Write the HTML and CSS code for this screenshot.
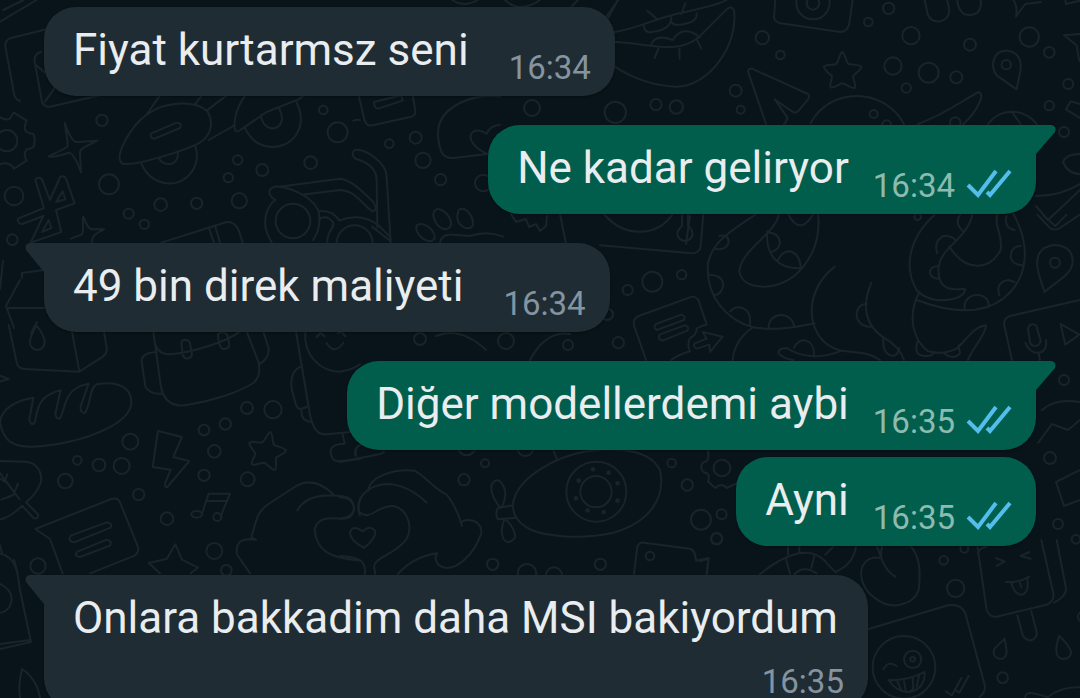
FILE: index.html
```html
<!DOCTYPE html>
<html lang="tr">

<head>
  <meta charset="UTF-8">
  <meta name="viewport" content="width=device-width, initial-scale=1">
  <title>Sohbet</title>
  <link rel="stylesheet" href="styles.css">
</head>

<body>

  <!-- wallpaper, each group is drawn at 3x -->
  <svg class="wallpaper" viewBox="0 0 1080 698" preserveAspectRatio="xMidYMid slice" aria-hidden="true">
    <defs>
      <path id="star" d="M0 -56C8 -52 10 -30 18 -20C34 -18 50 -18 57 -12C58 -2 38 8 32 16C34 32 42 44 37 52C26 54 12 40 0 38C-12 40 -24 54 -35 50C-40 42 -30 28 -31 16C-40 8 -56 -4 -55 -12C-48 -20 -30 -16 -18 -20C-10 -30 -8 -52 0 -56Z" />
      <g id="check"><path d="M2 17L12 27L30 3M21 24L24 27L44 3" /></g>
    </defs>

    <!-- top left: letters, gear, ufo, glasses -->
    <g transform="scale(.3333)">
      <path d="M0 65L110 0M10 30L70 0M60 302Q48 300 43 286L16 140Q14 122 30 115L140 88M150 320Q132 322 126 305L104 185Q102 160 124 155M108 195L190 265M135 305L170 255M150 320L300 286" />
    </g>
    <g transform="translate(0 90) scale(.3333)">
      <circle cx="20" cy="152" r="32" />
      <path d="M0 82Q18 92 30 86Q38 70 42 68L80 92Q70 112 78 125Q90 132 100 132Q108 150 100 172Q88 176 80 178Q68 192 80 212L42 236Q28 214 0 222" />
      <path d="M194 98C204 128 218 158 232 156L292 152C262 168 238 174 240 190L243 247C232 216 220 192 208 188C190 192 166 204 146 199C174 184 196 178 203 168C204 148 196 116 194 98Z" />
      <path d="M250 380C258 398 262 416 276 418L312 418C290 430 274 436 276 460M248 384Q252 430 244 434L212 446" />
      <path d="M106 270Q116 258 126 268L150 330L180 262Q190 254 198 266L224 340L168 360L184 426L92 458L130 378L66 402Q52 402 54 386L132 354ZM168 336L188 304L196 328ZM126 426L146 390L154 414Z" />
      <path d="M360 210C352 188 390 110 440 74C500 30 590 32 622 64C644 100 632 140 596 160C560 178 420 226 372 222Q362 220 360 210ZM454 130L530 98Q548 98 540 114L464 146Q446 142 454 130ZM424 220C450 284 520 296 562 260C590 236 596 200 586 168M476 204C488 230 536 232 534 186M440 74L480 16M584 44L606 16M620 62L680 16M626 150L700 108M736 16C710 50 698 96 706 122Q712 128 724 118L800 66L896 28L912 16M736 116C768 184 850 186 886 138C908 106 906 70 890 38M784 74C782 120 842 132 846 86Q846 70 838 56" />
      <path d="M808 304Q814 288 838 290L1020 266C1060 272 1086 304 1120 336Q1136 360 1118 364C1090 350 1070 302 1020 300L906 314M808 304Q808 320 826 330C796 352 786 400 806 440L816 460M838 290C880 294 940 324 956 364C990 360 1008 376 1018 392C1060 374 1110 378 1150 420L1170 440M956 364Q966 410 940 450M956 388Q980 372 1000 398C1004 416 980 420 982 460M1060 92Q1070 88 1080 90" />
      <circle cx="879" cy="393" r="52" /><circle cx="1064" cy="460" r="54" />
      <path d="M484 458L680 396Q704 394 716 420L728 458M628 418L642 458M646 410L660 458" />
      <circle cx="306" cy="91" r="17" /><circle cx="327" cy="283" r="30" /><circle cx="42" cy="318" r="28" /><circle cx="37" cy="449" r="16" /><circle cx="386" cy="371" r="15" /><circle cx="433" cy="403" r="14" /><circle cx="482" cy="344" r="19" /><circle cx="590" cy="340" r="17" /><circle cx="685" cy="263" r="14" /><circle cx="713" cy="210" r="14" /><circle cx="787" cy="240" r="18" /><circle cx="718" cy="332" r="23" /><circle cx="932" cy="218" r="19" /><circle cx="970" cy="60" r="13" /><circle cx="1013" cy="127" r="30" />
    </g>
    <g transform="translate(240 90) scale(.3333)">
      <path d="M356 16L374 92Q380 110 398 106L514 80Q528 76 526 62L518 16M402 36L484 16L488 32L414 56Q402 54 402 36Z" />
      <path d="M346 206Q330 190 344 180C376 174 440 220 440 260L452 458M346 206C380 214 410 236 410 270L412 412M396 410L452 454" />
      <path d="M780 20C700 8 594 50 594 130C596 180 606 206 640 204L742 192C704 174 682 148 696 128C710 116 730 124 740 132Q750 106 780 104" />
      <path d="M584 362C600 346 630 374 634 402C626 432 592 414 584 390Q576 374 584 362ZM656 360C676 346 704 380 698 408C680 426 650 404 652 378ZM530 406C552 392 586 420 584 446Q570 464 544 442Q524 422 530 406ZM600 458Q606 430 640 434L690 438Q740 420 790 440" />
      <circle cx="448" cy="161" r="13" /><circle cx="527" cy="143" r="18" /><circle cx="549" cy="211" r="23" /><circle cx="602" cy="269" r="17" /><circle cx="730" cy="279" r="25" />
    </g>

    <!-- strips between the bubbles -->
    <g>
      <path d="M511 214L516 222L526 219L529 227L536 224L540 231L546 226L547 216M560 214L566 244M690 216L686 244" />
      <path d="M452 0Q464 8 478 0M505 0Q520 14 540 0M572 6L578 0M604 20L618 0" />
      <circle cx="420" cy="339" r="6" /><circle cx="506" cy="341" r="8" /><circle cx="568" cy="345" r="5" /><circle cx="532" cy="108" r="8" />
      <path d="M436 336Q460 326 486 350M530 360Q546 330 570 334" />
    </g>

    <!-- top right: lips, camera, star, pins -->
    <g transform="translate(600 0) scale(.3333)">
      <path d="M44 96C120 84 160 58 220 44C290 28 350 18 380 0M44 126C140 128 230 168 298 110L382 26Q394 16 402 32C416 130 330 262 226 260C150 256 96 232 44 200M24 54L54 0M132 78Q134 100 156 96Q214 90 214 52M216 68Q224 80 262 70Q292 64 290 40M152 136Q166 100 218 120Q250 72 300 112M142 32L172 58M256 10L244 42M176 144L164 174M238 146L239 176M290 118L304 146" />
      <path d="M526 0L522 52Q524 66 542 70L722 96Q744 94 748 70L758 0M974 0L984 46Q996 68 1022 64Q1048 56 1048 30L1042 0M1072 0Q1074 30 1092 42Q1112 50 1132 38Q1146 24 1142 0M1240 0Q1254 20 1248 50Q1262 30 1276 12L1324 6M1396 0L1398 12L1440 2" />
      <circle cx="639" cy="8" r="50" /><circle cx="639" cy="10" r="19" />
      <use href="#star" x="727" y="212" />
      <path d="M498 372L444 214Q446 204 456 206L624 282Q630 288 624 298L594 334Q586 342 576 334L524 298L562 352Q562 364 552 372M632 370C690 260 850 260 912 372M954 372C1040 340 1090 300 1136 276Q1148 280 1142 300C1130 330 1116 350 1090 372M1164 372C1200 324 1270 322 1310 372M1236 336L1262 372M1440 102L1392 106L1430 136L1438 182M1440 312L1412 304L1398 328L1440 354" />
      <path d="M1250 268L1190 226C1166 190 1186 150 1220 152C1256 154 1268 184 1260 220Z" />
      <circle cx="1219" cy="194" r="14" /><circle cx="487" cy="113" r="20" /><circle cx="541" cy="165" r="13" /><circle cx="407" cy="272" r="18" /><circle cx="422" cy="329" r="12" /><circle cx="229" cy="321" r="20" /><circle cx="168" cy="314" r="17" /><circle cx="46" cy="337" r="32" /><circle cx="805" cy="66" r="13" /><circle cx="866" cy="25" r="17" /><circle cx="933" cy="107" r="26" /><circle cx="879" cy="198" r="26" /><circle cx="986" cy="218" r="30" /><circle cx="919" cy="264" r="14" /><circle cx="1069" cy="232" r="18" /><circle cx="1110" cy="134" r="18" /><circle cx="1288" cy="111" r="29" /><circle cx="1348" cy="157" r="16" /><circle cx="1405" cy="252" r="15" /><circle cx="1348" cy="317" r="14" /><circle cx="821" cy="342" r="12" /><circle cx="860" cy="374" r="13" /><circle cx="1066" cy="368" r="16" />
    </g>
    <g>
      <circle cx="1064" cy="132" r="5" />
      <path d="M1080 154Q1066 154 1063 162Q1068 174 1080 174M1036 196Q1060 196 1080 184M1036 206L1048 220L1080 190" />
    </g>

    <!-- middle right: octopus, document, pins -->
    <g transform="translate(600 210) scale(.3333)">
      <path d="M12 12C70 82 170 84 218 12M246 12V48Q226 66 234 80Q246 98 266 90Q284 78 274 58L264 46V12M310 12L302 110Q298 130 276 130L0 106" />
      <path d="M468 12C400 60 338 90 324 160C316 260 380 330 460 352C530 364 590 350 644 340M536 12C530 70 420 120 418 186C430 240 520 244 580 200C640 150 662 80 654 12M502 64C496 130 530 180 604 174M358 78Q386 70 386 98Q376 124 346 116M502 68Q536 66 540 98Q538 118 516 126M534 150Q546 124 570 124Q600 132 602 172M564 12Q600 80 640 12M328 194Q368 196 370 224Q366 252 344 256M390 304C410 280 456 292 450 342M506 352C508 302 578 304 582 350" />
      <path d="M704 170C600 250 620 400 724 422C660 450 600 440 560 414Q534 414 536 430Q550 446 580 450M724 422C790 430 800 426 840 450M814 218C780 300 804 350 850 382Q900 410 912 450M800 282C760 280 756 350 812 350M850 384Q846 430 876 438Q894 438 898 414M582 414C596 378 644 384 642 436M398 450Q404 390 456 354" />
      <path d="M1004 14C920 90 914 180 950 240C980 274 1030 276 1070 264Q1100 250 1094 236C1060 240 1010 246 1016 170C1024 110 1100 90 1118 12M1048 110C1100 190 1170 180 1202 120C1210 70 1180 50 1192 12M1240 12C1290 100 1290 200 1212 264C1140 320 1040 304 950 270M958 246C920 320 940 390 984 424Q1030 436 1070 416C1100 390 1120 350 1158 346C1160 370 1120 410 1104 450M1082 12Q1060 40 1092 66M1012 130Q1000 94 1030 78Q1056 76 1066 90M1014 168Q990 170 990 188Q994 206 1016 206M1220 18Q1210 52 1244 60M1262 108Q1234 108 1232 140Q1236 164 1268 166M1198 256Q1186 216 1226 210L1244 216M1094 298C1086 244 1170 240 1166 290M954 392Q938 436 974 438Q998 440 1000 428M1032 430Q1060 452 1080 430L1076 406" />
      <path d="M1312 14L1352 56Q1368 62 1380 54L1440 14M1332 18L1366 48L1400 14M1334 246C1310 180 1300 140 1330 116C1370 92 1420 110 1418 156C1416 196 1360 220 1334 246Z" />
      <circle cx="1365" cy="158" r="15" />
      <path d="M138 450L102 346Q98 326 116 318L276 260Q294 260 298 278L320 344Q300 348 290 356Q290 374 270 384Q260 406 270 424Q230 436 214 450M168 342L244 314Q258 318 252 330L170 360Q158 352 168 342ZM178 374L254 346Q270 350 262 362L188 392Q172 386 178 374ZM308 366L368 380L330 426L328 404L290 416Q278 410 284 400L320 386Z" />
      <path d="M1236 450L1212 342Q1212 324 1230 318L1440 270M1284 358C1286 338 1312 338 1312 358L1322 392C1318 414 1292 412 1290 394ZM1276 398C1290 440 1346 440 1338 390M1316 430L1320 450M1382 342L1438 374L1396 404Z" />
      <circle cx="157" cy="215" r="30" /><circle cx="83" cy="240" r="15" /><circle cx="245" cy="194" r="14" /><circle cx="55" cy="398" r="17" /><circle cx="22" cy="313" r="17" /><circle cx="953" cy="20" r="10" />
    </g>
    <g>
      <path d="M1042 410Q1055 398 1080 402M1038 443L1052 424L1068 430L1080 420M1080 470L1056 482L1064 506L1080 500" />
      <circle cx="1064" cy="380" r="5" /><circle cx="1050" cy="458" r="6" /><circle cx="1058" cy="524" r="5" />
    </g>

    <!-- left: carton, bread, bag, bolt, notes, hands -->
    <g>
      <path d="M22 278V273L44 270M20 280L6 306L14 328M7 308L44 308M0 289L3 261" />
      <path d="M37 322Q33 328 31 334" />
    </g>
    <g transform="translate(0 325) scale(.3333)">
      <path d="M26 0L50 112Q54 132 74 132L238 140L216 20M238 140L310 94Q322 84 320 68L312 20M110 2C96 24 84 46 92 62C104 82 128 76 134 56Q136 34 110 2ZM0 152L26 162L0 170" />
      <path d="M0 290C6 250 50 226 100 218L88 284Q90 300 102 296C116 270 100 216 182 196L166 266Q168 284 180 280C198 250 190 188 266 176L242 244Q240 264 254 264C274 240 266 190 290 178C340 168 394 180 394 230C396 290 280 336 200 352C110 370 60 370 30 350Q6 330 0 290Z" />
      <path d="M460 20L482 180C490 230 520 246 560 240C640 228 720 200 760 174Q784 154 776 112L740 20M466 60Q480 90 510 88C580 82 680 50 720 20M470 80C430 84 422 96 426 116L436 184Q448 208 486 206M790 20L806 70Q808 100 780 116M544 52C548 40 566 42 570 54L576 90C570 104 554 104 548 90ZM654 28Q672 14 682 30L688 58Q686 74 668 72Q656 66 654 28Z" />
      <path d="M888 20L930 270C940 310 950 330 980 328L1060 320M916 20C910 90 960 140 1020 140Q1060 134 1080 118M980 54Q1002 92 1030 54M950 36L962 24L974 34M1014 24L1024 20L1036 34M900 126C870 140 870 180 880 210C890 250 890 260 920 246M904 256Q904 290 932 290M1028 328L1034 356Q990 356 992 384Q996 414 1026 408L1080 402M1080 360Q1064 366 1066 390" />
      <path d="M474 318L546 336L520 396L568 408L502 486Q492 488 496 474L512 434L458 426Z" />
      <use href="#star" transform="translate(800 376) rotate(12)" />
      <path d="M606 566L626 506H690L662 574M618 528H682" />
      <ellipse cx="590" cy="568" rx="16" ry="10" /><circle cx="652" cy="576" r="12" />
      <path d="M0 408L76 410C116 412 128 450 122 474Q110 506 78 532L114 568Q118 582 102 580L66 542Q36 574 0 584M0 444L58 522M0 460L14 470L22 448M4 524L40 510L54 476M12 462L50 512" />
      <path d="M188 745L150 642L106 612L334 522Q352 516 360 532L414 666Q418 682 404 692L270 745M212 632L320 592Q338 594 332 608L222 652Q202 650 212 632ZM232 680L320 644Q338 648 330 662L240 696Q220 694 232 680Z" />
      <path d="M446 714L500 702L526 658L546 704L594 728L572 745M446 714L480 745M0 686Q42 694 52 745M0 660L6 684" />
      <path d="M768 644L754 638C772 570 776 556 810 534L884 486Q940 450 1000 508M892 556C920 510 970 508 1030 514C1066 520 1070 560 1048 578C1020 590 960 560 944 612C948 670 980 700 1080 706M768 644C720 638 704 656 712 690L750 745M1080 526Q1070 550 1080 572" />
      <circle cx="391" cy="350" r="24" /><circle cx="365" cy="423" r="24" /><circle cx="297" cy="420" r="19" /><circle cx="232" cy="406" r="13" /><circle cx="196" cy="468" r="22" /><circle cx="416" cy="509" r="17" /><circle cx="501" cy="581" r="19" /><circle cx="612" cy="315" r="16" /><circle cx="676" cy="297" r="17" /><circle cx="741" cy="249" r="18" /><circle cx="819" cy="254" r="26" /><circle cx="643" cy="379" r="19" /><circle cx="612" cy="451" r="17" /><circle cx="743" cy="463" r="21" /><circle cx="643" cy="678" r="24" /><circle cx="679" cy="736" r="16" /><circle cx="114" cy="723" r="23" />
    </g>
    <g>
      <path d="M14 560Q17 568 20 590L31 642L0 649M0 644L30 640M0 584Q16 592 10 606Q6 612 0 613M40 698C38 684 30 674 22 669Q18 684 20 698" />
    </g>

    <!-- middle: hands with heart, airship, puzzle -->
    <g transform="translate(340 440) scale(.3333)">
      <path d="M72 324Q30 300 30 278Q38 252 68 274Q92 252 106 274Q108 296 72 324ZM0 172C30 172 44 190 42 210Q34 232 0 236M0 348C60 350 80 366 74 402M260 188C210 140 150 120 102 140C60 160 50 190 58 216C90 246 110 196 160 198C200 206 224 260 196 302C160 346 106 350 102 380L106 402M84 152C90 110 160 86 224 92C270 120 280 146 320 164Q350 200 366 258M366 244C400 232 426 250 424 280C400 350 350 384 320 384C290 380 280 356 292 340M292 340Q220 350 174 402M0 66L110 44Q128 42 132 34M48 48L46 30" />
      <path d="M518 196C528 110 650 50 740 34C840 20 930 30 960 90C980 180 920 250 820 278C720 300 600 290 556 260Q520 236 518 196ZM640 30L652 60M482 204Q452 170 454 136Q466 114 480 124C500 144 500 170 486 200ZM518 196L474 204Q464 220 474 238L524 234M492 242C480 270 486 302 502 306Q520 306 526 290Q522 260 498 240" />
      <circle cx="769" cy="155" r="90" /><circle cx="768" cy="155" r="47" />
      <g class="rivets"><circle cx="759" cy="88" r="4" /><circle cx="806" cy="98" r="4" /><circle cx="833" cy="130" r="4" /><circle cx="833" cy="182" r="4" /><circle cx="791" cy="216" r="4" /><circle cx="743" cy="211" r="4" /><circle cx="708" cy="175" r="4" /><circle cx="716" cy="122" r="4" /></g>
      <path d="M1104 30Q1108 56 1100 64Q1084 66 1084 80Q1084 98 1102 100Q1110 110 1104 124L1126 144Q1144 126 1160 144L1190 130" />
      <circle cx="1146" cy="84" r="25" />
      <path d="M882 402L892 320Q898 306 912 308L1050 326Q1066 330 1068 362L1106 354L1100 402" />
      <circle cx="372" cy="119" r="17" /><circle cx="435" cy="70" r="12" /><circle cx="995" cy="69" r="13" /><circle cx="1042" cy="135" r="17" /><circle cx="1083" cy="239" r="30" /><circle cx="1145" cy="223" r="15" /><circle cx="1130" cy="296" r="16" /><circle cx="930" cy="348" r="13" /><circle cx="458" cy="373" r="17" /><circle cx="781" cy="373" r="17" /><circle cx="561" cy="400" r="28" /><circle cx="642" cy="406" r="24" /><circle cx="380" cy="20" r="26" /><circle cx="556" cy="24" r="24" />
    </g>

    <!-- bottom right: ice cream, sticker, drops -->
    <g transform="translate(700 540) scale(.3333)">
      <path d="M180 102Q230 62 270 48C320 28 360 40 384 74L408 98M258 56L270 102M344 44L334 84M284 102Q310 74 350 100M264 16V44M298 12V38M376 44L404 16M410 94Q460 72 468 20M0 64L26 56L20 102" />
      <path d="M586 110Q556 92 544 54C500 46 480 76 484 110C490 160 550 206 600 194Q646 184 656 150C662 100 662 50 630 16M544 54L530 16M544 54Q542 30 548 16" />
      <path d="M832 16L860 210Q868 232 890 230L1040 194Q1064 184 1060 160L1024 0M1062 188Q1100 170 1098 144L1070 0M834 42Q836 24 860 20M888 54L914 64L890 78M988 36L962 48L992 56M918 126Q960 128 988 110M934 128Q944 166 968 164Q988 154 982 118M960 128L964 142M952 226L968 286Q978 304 996 300Q1012 294 1010 276L994 214" />
      <path d="M504 268L744 196Q784 190 796 220L854 434Q858 456 840 470" />
      <circle cx="612" cy="382" r="94" /><circle cx="638" cy="358" r="26" /><circle cx="638" cy="358" r="7" />
      <path d="M550 388Q566 360 590 378M566 420Q620 424 674 396C676 430 656 456 620 456Q586 452 566 420ZM592 424L604 450M612 424L618 456Q634 458 640 444L638 414M658 404L650 440M738 454L756 466L784 414M768 452L778 458L806 408" />
      <path d="M914 296L884 326C874 346 892 360 908 356Q920 350 920 334ZM1078 288C1066 320 1064 350 1084 356Q1106 360 1114 340Q1112 320 1078 288ZM976 474Q974 456 1000 460L1040 470M1040 474Q1080 440 1140 442" />
      <circle cx="767" cy="145" r="26" /><circle cx="731" cy="61" r="13" /><circle cx="793" cy="26" r="12" /><circle cx="908" cy="413" r="16" /><circle cx="50" cy="-4" r="17" /><circle cx="1150" cy="230" r="16" /><circle cx="1128" cy="-2" r="13" />
    </g>
  </svg>

  <main class="chat">

    <div class="message in">
      <p class="text">Fiyat kurtarmsz seni</p>
      <div class="meta"><time>16:34</time></div>
    </div>

    <div class="message out first">
      <svg class="tail" viewBox="0 0 40 40" aria-hidden="true"><path d="M0 0H35Q41 1 39 7L20 29V40H0Z" /></svg>
      <p class="text">Ne kadar geliryor</p>
      <div class="meta">
        <time>16:34</time>
        <svg class="ticks" viewBox="0 0 46 30" role="img" aria-label="Okundu"><use href="#check" /></svg>
      </div>
    </div>

    <div class="message in first">
      <svg class="tail" viewBox="0 0 40 40" aria-hidden="true"><path d="M40 0H5Q-1 1 1 7L19 29V40H40Z" /></svg>
      <p class="text">49 bin direk maliyeti</p>
      <div class="meta"><time>16:34</time></div>
    </div>

    <div class="message out first">
      <svg class="tail" viewBox="0 0 40 40" aria-hidden="true"><path d="M0 0H35Q41 1 39 7L20 29V40H0Z" /></svg>
      <p class="text">Diğer modellerdemi aybi</p>
      <div class="meta">
        <time>16:35</time>
        <svg class="ticks" viewBox="0 0 46 30" role="img" aria-label="Okundu"><use href="#check" /></svg>
      </div>
    </div>

    <div class="message out">
      <p class="text">Ayni</p>
      <div class="meta">
        <time>16:35</time>
        <svg class="ticks" viewBox="0 0 46 30" role="img" aria-label="Okundu"><use href="#check" /></svg>
      </div>
    </div>

    <div class="message in first long">
      <svg class="tail" viewBox="0 0 40 40" aria-hidden="true"><path d="M40 0H5Q-1 1 1 7L19 29V40H40Z" /></svg>
      <p class="text">Onlara bakkadim daha MSI bakiyordum</p>
      <div class="meta"><time>16:35</time></div>
    </div>

  </main>

</body>

</html>
```

FILE: styles.css
```css
:root {
  --background: #08141a;
  --doodle: #18242a;
  --bubble-in: #202c33;
  --bubble-out: #025e4c;
  --text: #e9edef;
  --ticks: #53bdeb;
}

* {
  box-sizing: border-box;
}

body {
  margin: 0;
  height: 100vh;
  overflow: hidden;
  position: relative;
  background-color: var(--background);
  color: var(--text);
  font-family: Roboto, sans-serif;
  font-size: 44px;
}

.wallpaper {
  position: absolute;
  top: 0;
  left: 0;
  width: 100%;
  height: 100%;
  fill: none;
  stroke: var(--doodle);
  stroke-width: 2;
  stroke-linecap: round;
  stroke-linejoin: round;
}

.wallpaper g[transform] {
  stroke-width: 6;
}

.wallpaper .rivets {
  fill: var(--doodle);
}

.chat {
  position: relative;
  display: flex;
  flex-direction: column;
  padding: 7px 44px 0;
}

.message {
  position: relative;
  display: flex;
  align-items: flex-end;
  min-height: 89px;
  padding: 17px 24px 9px 29px;
  border-radius: 32px;
  box-shadow: 0 1px 2px rgba(0, 0, 0, 0.4);
}

.in {
  align-self: flex-start;
  gap: 40px;
  background-color: var(--bubble-in);
  fill: var(--bubble-in);
}

.out {
  align-self: flex-end;
  gap: 24px;
  margin-top: 7px;
  background-color: var(--bubble-out);
  fill: var(--bubble-out);
}

.first {
  margin-top: 29px;
}

.in.first {
  border-top-left-radius: 0;
}

.out.first {
  border-top-right-radius: 0;
}

.tail {
  position: absolute;
  top: 0;
  width: 40px;
  height: 40px;
}

.in .tail {
  left: -19px;
}

.out .tail {
  right: -20px;
}

.text {
  margin: 0;
  align-self: flex-start;
  line-height: 52px;
}

.meta {
  display: flex;
  align-items: center;
  gap: 11px;
  font-size: 33px;
  line-height: 38px;
  color: #8494a0;
}

.out .meta {
  color: #8dbbb0;
}

.ticks {
  width: 46px;
  height: 30px;
  margin-bottom: 6px;
  fill: none;
  stroke: var(--ticks);
  stroke-width: 4;
}

.long {
  flex-direction: column;
  gap: 19px;
}

.long .text {
  padding-right: 6px;
}
```
